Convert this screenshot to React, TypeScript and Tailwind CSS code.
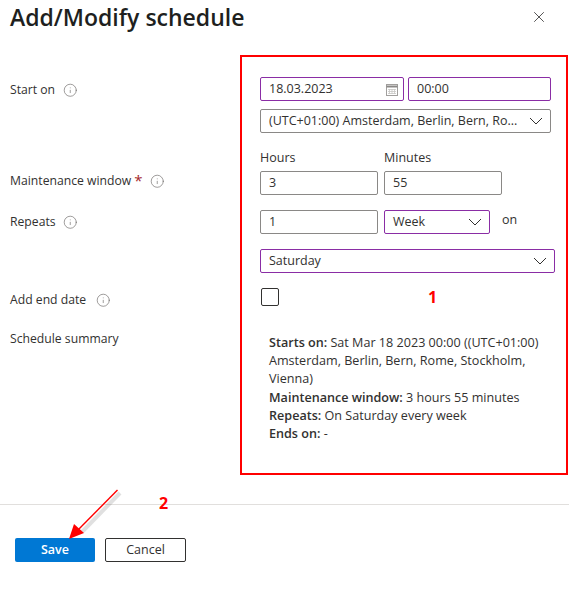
import { Info, X } from "lucide-react";

const purple = "border-[#8a2da5]";
const gray = "border-[#8a8886]";

function Chevron() {
  return (
    <svg width="14" height="8" viewBox="0 0 14 8" fill="none" stroke="#323130" strokeWidth="1" className="shrink-0">
      <path d="M1 1 L7 7 L13 1" />
    </svg>
  );
}

function Label({ text, className, required, gap = "ml-2" }: { text: string; className: string; required?: boolean; gap?: string }) {
  return (
    <div className={`flex h-5 items-center text-[12.2px] text-[#323130] ${className}`}>
      <span>{text}</span>
      {required && <span className="relative ml-[3px] top-[-1px] text-[15px] leading-none text-[#a4262c]">*</span>}
      <Info size={14.5} strokeWidth={1} className={`${gap} text-[#605e5c]`} />
    </div>
  );
}

function Field({ value, className, chevron }: { value: string; className: string; chevron?: boolean }) {
  return (
    <div className={`flex h-6 shrink-0 items-center justify-between rounded-[2px] border pl-2 pr-[7px] text-[12.5px] text-[#323130] ${className}`}>
      <span className="whitespace-nowrap">{value}</span>
      {chevron && <Chevron />}
    </div>
  );
}

function CalendarIcon() {
  return (
    <svg width="12" height="12" viewBox="0 0 12 12" fill="none" stroke="#a19f9d" strokeWidth="1">
      <rect x="0.5" y="0.5" width="11" height="11" />
      <path d="M0.5 2.5h11" strokeWidth="2" stroke="#8a8886" />
      <path d="M2 5.5h8M2 7.5h8M2 9.5h8M3.5 5v5M6 5v5M8.5 5v5" strokeWidth="0.8" stroke="#c8c6c4" />
    </svg>
  );
}

export default function App() {
  return (
    <div className="relative h-[589px] w-[569px] overflow-hidden bg-white font-['Open_Sans','Noto_Sans',sans-serif]">
      <header className="flex h-[34px] items-center justify-between pl-[10px] pr-[21px]">
        <h1 className="text-[23px] font-semibold text-[#201f1e]">Add/Modify schedule</h1>
        <X size={18} strokeWidth={1.1} className="text-[#323130]" />
      </header>

      <div className="flex h-[471px] border-b border-[#e1dfdd]">
        <div className="w-[260px] pl-[10px]">
          <Label text="Start on" className="mt-[46px]" />
          <Label text="Maintenance window" required gap="ml-[7px]" className="mt-[71px]" />
          <Label text="Repeats" gap="ml-[7px]" className="mt-[21px]" />
          <Label text="Add end date" gap="ml-[10px]" className="mt-[58px]" />
          <div className="mt-[19px] text-[12.2px] leading-5 text-[#323130]">Schedule summary</div>
        </div>

        <div className="flex flex-col">
          <div className="mt-[43px] flex gap-1">
            <div className={`flex h-6 w-[144px] items-center justify-between rounded-[2px] border ${purple} pl-2 pr-[5px] pt-px text-[12.5px] text-[#323130]`}>
              <span>18.03.2023</span>
              <CalendarIcon />
            </div>
            <Field value="00:00" className={`w-[143px] pt-px ${purple}`} />
          </div>
          <Field value="(UTC+01:00) Amsterdam, Berlin, Bern, Ro..." chevron className={`mt-2 w-[291px] ${gray}`} />
          <div className="mt-[15px] flex gap-[6px] text-[12.5px] leading-5 text-[#323130]">
            <span className="w-[118px]">Hours</span>
            <span>Minutes</span>
          </div>
          <div className="mt-[3px] flex gap-[6px]">
            <Field value="3" className={`w-[118px] ${gray}`} />
            <Field value="55" className={`w-[118px] ${gray}`} />
          </div>
          <div className="mt-[15px] flex gap-[6px]">
            <Field value="1" className={`w-[118px] ${gray}`} />
            <Field value="Week" chevron className={`w-[106px] ${purple}`} />
            <span className="ml-[6px] text-[12.5px] leading-5 text-[#323130]">on</span>
          </div>
          <Field value="Saturday" chevron className={`mt-[15px] w-[295px] ${purple}`} />
          <div className="ml-px mt-[15px] h-[18px] w-[18px] rounded-[2px] border border-[#323130]" />
          <div className="ml-[9px] mt-[28px] w-[275px] text-[12.6px] leading-[18.2px] text-[#323130]">
            <p>
              <b className="font-semibold">Starts on:</b> Sat Mar 18 2023 00:00 ((UTC+01:00) Amsterdam, Berlin, Bern, Rome, Stockholm, Vienna)
            </p>
            <p>
              <b className="font-semibold">Maintenance window:</b> 3 hours 55 minutes
            </p>
            <p>
              <b className="font-semibold">Repeats:</b> On Saturday every week
            </p>
            <p>
              <b className="font-semibold">Ends on:</b> -
            </p>
          </div>
        </div>
      </div>

      <footer className="mt-[33px] flex gap-[10px] pl-[15px]">
        <button type="button" className="h-6 w-20 rounded-[2px] bg-[#0078d4] text-[12.5px] font-semibold text-white">
          Save
        </button>
        <button type="button" className="h-6 w-[81px] rounded-[2px] border border-[#323130] bg-white text-[12.5px] text-[#323130]">
          Cancel
        </button>
      </footer>

      {/* annotations drawn over the screenshot */}
      <div className="pointer-events-none absolute left-[240px] top-[55px] h-[420px] w-[328px] border-2 border-[#ff0000]" />
      <span className="absolute left-[428px] top-[287px] text-[16px] font-bold leading-5 text-[#ff0000]">1</span>
      <span className="absolute left-[159px] top-[493px] text-[16px] font-bold leading-5 text-[#ff0000]">2</span>
      <svg className="pointer-events-none absolute left-[60px] top-[480px]" width="70" height="70" viewBox="0 0 70 70" fill="none">
        <path d="M60 13 L22 52" stroke="#000" strokeOpacity="0.12" strokeWidth="4" />
        <path d="M57.5 10 L15 53" stroke="#ff0000" strokeWidth="1.4" />
        <path d="M9 59 L14 44 L24 53 Z" fill="#ff0000" />
      </svg>
    </div>
  );
}
